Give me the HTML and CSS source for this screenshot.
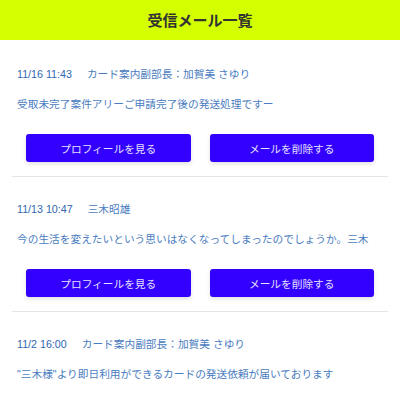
FILE: index.html
```html
<!DOCTYPE html>
<html lang="ja">
<head>
    <meta charset="UTF-8">
    <meta name="viewport" content="width=device-width, initial-scale=1.0">
    <title>受信メール一覧</title>
    <link rel="stylesheet" href="styles.css">
</head>
<body>
    <header class="page-header">
        <h1>受信メール一覧</h1>
    </header>

    <ul class="mail-list">
        <li class="mail-item">
            <div class="mail-meta"><span class="mail-date">11/16 11:43</span><span class="mail-from">カード案内副部長：加賀美 さゆり</span></div>
            <p class="mail-body">受取未完了案件アリーご申請完了後の発送処理ですー</p>
            <div class="mail-actions">
                <button class="btn">プロフィールを見る</button>
                <button class="btn">メールを削除する</button>
            </div>
        </li>
        <li class="mail-item">
            <div class="mail-meta"><span class="mail-date">11/13 10:47</span><span class="mail-from">三木昭雄</span></div>
            <p class="mail-body">今の生活を変えたいという思いはなくなってしまったのでしょうか。三木</p>
            <div class="mail-actions">
                <button class="btn">プロフィールを見る</button>
                <button class="btn">メールを削除する</button>
            </div>
        </li>
        <li class="mail-item">
            <div class="mail-meta"><span class="mail-date">11/2 16:00</span><span class="mail-from">カード案内副部長：加賀美 さゆり</span></div>
            <p class="mail-body">"三木様"より即日利用ができるカードの発送依頼が届いております</p>
            <div class="mail-actions">
                <button class="btn">プロフィールを見る</button>
                <button class="btn">メールを削除する</button>
            </div>
        </li>
    </ul>
</body>
</html>
```

FILE: styles.css
```css
body {
    margin: 0;
    font-family: "Liberation Sans", "Noto Sans CJK JP", sans-serif;
    background: #fff;
}

/* ヘッダー */
.page-header {
    background: #d4ff00;
    height: 40px;
    display: flex;
    align-items: center;
    justify-content: center;
}

.page-header h1 {
    margin: 0;
    font: 700 15px/20px "Noto Sans CJK JP", sans-serif;
    color: #333;
}

/* メール一覧 */
.mail-list {
    list-style: none;
    margin: 0 12px;
    padding: 2px 0 0;
}

.mail-item {
    padding: 24px 0 14px;
    border-bottom: 1px solid #e6e6e6;
}

.mail-meta {
    padding: 0 5px;
    font-size: 10.7px;
    line-height: 16px;
    color: #4a7cc0;
}

.mail-date {
    color: #2f67b0;
    margin-right: 15px;
}

.mail-body {
    margin: 14px 0 0;
    padding: 0 5px;
    font-size: 10.7px;
    line-height: 16px;
    color: #4a7cc0;
    white-space: nowrap;
    overflow: hidden;
}

.mail-actions {
    display: grid;
    grid-template-columns: 1fr 1fr;
    gap: 19px;
    padding: 0 14px;
    margin-top: 22px;
}

.btn {
    height: 28px;
    border: none;
    border-radius: 3px;
    background: #3300ff;
    color: #e4e0ff;
    font: 400 10.7px/28px "Liberation Sans", "Noto Sans CJK JP", sans-serif;
    box-shadow: 0 2px 4px rgba(0, 0, 0, 0.12);
    cursor: pointer;
}
```
